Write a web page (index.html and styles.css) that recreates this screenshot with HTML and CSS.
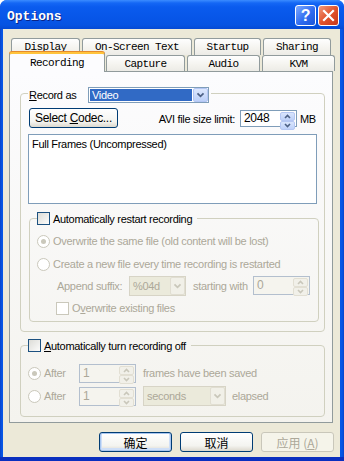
FILE: index.html
```html
<!DOCTYPE html>
<html lang="en">
  <head>
    <meta charset="UTF-8" />
    <title>Options</title>
    <link rel="stylesheet" href="styles.css">
  </head>
  <body>
    <div class="window">
      <div class="titlebar">
        <span class="title">Options</span>
        <div class="caption">
          <span class="cbtn help">?</span>
          <span class="cbtn close">
            <svg width="19" height="19" viewBox="0 0 19 19"><path d="M5 5 L14 14 M14 5 L5 14" stroke="#fff" stroke-width="2.2" stroke-linecap="square"/></svg>
          </span>
        </div>
      </div>
      <div class="client">
        <div class="tabs">
          <div class="tabrow back">
            <span class="tab t-display">Display</span>
            <span class="tab t-ost">On-Screen Text</span>
            <span class="tab t-startup">Startup</span>
            <span class="tab t-sharing">Sharing</span>
          </div>
          <div class="tabrow front">
            <span class="tab t-recording on">Recording</span>
            <span class="tab t-capture">Capture</span>
            <span class="tab t-audio">Audio</span>
            <span class="tab t-kvm">KVM</span>
          </div>
        </div>

        <div class="panel">
          <fieldset class="group g-record">
            <legend class="lg-record">
              <span class="lg-in">
                <span class="lbl-record"><u>R</u>ecord as</span>
                <span class="combo c-video">
                  <span class="value sel">Video</span>
                  <span class="drop">
                    <svg width="15" height="14" viewBox="0 0 15 14"><path d="M4 5 L7.5 8.5 L11 5" fill="none" stroke="#4d6185" stroke-width="2"/></svg>
                  </span>
                </span>
              </span>
            </legend>
            <div class="codec-row">
              <span class="btn codec"><span>Select <u>C</u>odec...</span></span>
              <div class="limit">
                <span>AVI file size limit:</span>
                <span class="spin">
                  <span class="val">2048</span>
                  <span class="arrows">
                    <span class="arr"><svg width="13" height="7" viewBox="0 0 13 7"><path d="M4 5 L6.5 2.5 L9 5" fill="none" stroke="#4d6185" stroke-width="1.6"/></svg></span>
                    <span class="arr"><svg width="13" height="7" viewBox="0 0 13 7"><path d="M4 2 L6.5 4.5 L9 2" fill="none" stroke="#4d6185" stroke-width="1.6"/></svg></span>
                  </span>
                </span>
                <span class="mb">MB</span>
              </div>
            </div>
            <div class="listbox">Full Frames (Uncompressed)</div>

            <fieldset class="group g-restart">
              <legend class="lg-check">
                <span class="lg-in"><span class="check"></span><span>Automatically restart recording</span></span>
              </legend>
              <div class="opt r1 off"><span class="radio dot"></span><span>Overwrite the same file (old content will be lost)</span></div>
              <div class="opt r2 off"><span class="radio"></span><span>Create a new file every time recording is restarted</span></div>
              <div class="opt r3 off">
                <span class="lbl-suffix">Append suffix:</span>
                <span class="combo c-suffix dis">
                  <span class="value">%04d</span>
                  <span class="drop">
                    <svg width="15" height="14" viewBox="0 0 15 14"><path d="M4 5 L7.5 8.5 L11 5" fill="none" stroke="#c9c7ba" stroke-width="2"/></svg>
                  </span>
                </span>
                <span class="lbl-start">starting with</span>
                <span class="spin dis">
                  <span class="val">0</span>
                  <span class="arrows">
                    <span class="arr"><svg width="13" height="7" viewBox="0 0 13 7"><path d="M4 5 L6.5 2.5 L9 5" fill="none" stroke="#c9c7ba" stroke-width="1.6"/></svg></span>
                    <span class="arr"><svg width="13" height="7" viewBox="0 0 13 7"><path d="M4 2 L6.5 4.5 L9 2" fill="none" stroke="#c9c7ba" stroke-width="1.6"/></svg></span>
                  </span>
                </span>
              </div>
              <div class="opt r4 off"><span class="check dis"></span><span>O<u>v</u>erwrite existing files</span></div>
            </fieldset>
          </fieldset>

          <fieldset class="group g-off">
            <legend class="lg-check">
              <span class="lg-in"><span class="check"></span><span><u>A</u>utomatically turn recording off</span></span>
            </legend>
            <div class="opt s1 off">
              <span class="after"><span class="radio dot"></span><span>After</span></span>
              <span class="spin dis">
                <span class="val">1</span>
                <span class="arrows">
                  <span class="arr"><svg width="13" height="7" viewBox="0 0 13 7"><path d="M4 5 L6.5 2.5 L9 5" fill="none" stroke="#c9c7ba" stroke-width="1.6"/></svg></span>
                  <span class="arr"><svg width="13" height="7" viewBox="0 0 13 7"><path d="M4 2 L6.5 4.5 L9 2" fill="none" stroke="#c9c7ba" stroke-width="1.6"/></svg></span>
                </span>
              </span>
              <span class="tail">frames have been saved</span>
            </div>
            <div class="opt s2 off">
              <span class="after"><span class="radio"></span><span>After</span></span>
              <span class="spin dis">
                <span class="val">1</span>
                <span class="arrows">
                  <span class="arr"><svg width="13" height="7" viewBox="0 0 13 7"><path d="M4 5 L6.5 2.5 L9 5" fill="none" stroke="#c9c7ba" stroke-width="1.6"/></svg></span>
                  <span class="arr"><svg width="13" height="7" viewBox="0 0 13 7"><path d="M4 2 L6.5 4.5 L9 2" fill="none" stroke="#c9c7ba" stroke-width="1.6"/></svg></span>
                </span>
              </span>
              <span class="combo c-seconds dis">
                <span class="value">seconds</span>
                <span class="drop">
                  <svg width="15" height="14" viewBox="0 0 15 14"><path d="M4 5 L7.5 8.5 L11 5" fill="none" stroke="#c9c7ba" stroke-width="2"/></svg>
                </span>
              </span>
              <span class="tail2">elapsed</span>
            </div>
          </fieldset>
        </div>

        <div class="buttons">
          <span class="btn dlg default"><span>确定</span></span>
          <span class="btn dlg"><span>取消</span></span>
          <span class="btn dlg dis"><span>应用 (<u>A</u>)</span></span>
        </div>
      </div>
    </div>
  </body>
</html>
```

FILE: styles.css
```css
* {
  margin: 0;
  padding: 0;
  box-sizing: border-box;
}
body {
  background: #fff;
  font-family: "Liberation Sans", Arial, sans-serif;
  font-size: 11px;
  letter-spacing: -0.3px;
  color: #000;
}
.window {
  width: 344px;
  height: 461px;
  display: flex;
  flex-direction: column;
  background: linear-gradient(to right, #0843c9, #0656e6 2px, #0656e6 calc(100% - 2px), #0843c9);
  border-radius: 7px 7px 0 0;
  border-bottom: 4px solid #0a2fbf;
  overflow: hidden;
}
.titlebar {
  height: 29px;
  display: flex;
  align-items: center;
  justify-content: space-between;
  padding: 0 5px 0 7px;
  background: linear-gradient(#3b8cff 0, #1467f5 3px, #0a5bee 7px, #0756e8 18px, #0653e2 25px, #0549d4 29px);
}
.title {
  font: bold 13px "Liberation Mono", monospace;
  letter-spacing: 0;
  color: #fff;
  text-shadow: 1px 1px 0 #0b2486;
  padding-top: 3px;
}
.caption {
  display: flex;
  gap: 2px;
  margin-top: 2px;
}
.cbtn {
  width: 21px;
  height: 21px;
  border: 1px solid #fff;
  border-radius: 3px;
  display: flex;
  align-items: center;
  justify-content: center;
}
.help {
  background: linear-gradient(135deg, #7fa9ff, #2f6cf0 55%, #1c55d8);
  color: #fff;
  font: bold 16px "Liberation Sans", sans-serif;
}
.close {
  background: linear-gradient(135deg, #f29a7c, #e1542d 50%, #c7381a);
}

.client {
  flex: 1;
  margin: 0 4px 0 3px;
  background: #ece9d8;
  display: flex;
  flex-direction: column;
}

/* tabs */
.tabs {
  margin: 9px 0 0 6px;
}
.tabrow {
  display: flex;
}
.tabrow.back {
  height: 15px;
  padding-left: 2px;
  gap: 2px;
}
.tabrow.front {
  height: 18px;
  gap: 1px;
}
.tab {
  display: block;
  height: 17px;
  border: 1px solid #919b9c;
  border-bottom: none;
  border-radius: 3px 3px 0 0;
  background: linear-gradient(#fefefe, #f4f3ee 60%, #ecebe6);
  font: 11px "Liberation Mono", monospace;
  letter-spacing: -0.6px;
  text-align: center;
  line-height: 15px;
  padding-top: 1px;
}
.front .tab {
  margin-top: 2px;
  height: 16px;
}
.front .tab.on {
  position: relative;
  z-index: 2;
  margin-top: -1px;
  height: 20px;
  background: #fcfcfe;
  border-top: 2px solid #ffc43c;
  box-shadow: 0 -1px 0 #e68b2c;
  line-height: 16px;
}
.t-display { width: 69px; }
.t-ost { width: 110px; }
.t-startup { width: 67px; }
.t-sharing { width: 68px; }
.t-recording { width: 96px; }
.t-capture { width: 79px; }
.t-audio { width: 73px; margin-left: 1px; }
.t-kvm { width: 73px; margin-left: 1px; }

/* panel */
.panel {
  margin: 0 7px 0 6px;
  height: 352px;
  border: 1px solid #919b9c;
  background: linear-gradient(#fcfcfe, #f4f3ee);
  padding: 12px 0 0 10px;
}
.group {
  border: 1px solid #d0d0bf;
  border-radius: 4px;
  min-width: 0;
  width: 305px;
  padding: 5px 7px 9px;
}
legend {
  padding: 0;
}
.lg-in {
  display: flex;
  align-items: center;
}
.lg-record {
  padding: 3px 2px 0 1px;
}
.lbl-record {
  width: 59px;
}
.lg-check .lg-in {
  height: 13px;
  gap: 3px;
  padding-right: 5px;
}
u {
  text-decoration: underline;
  text-underline-offset: 1px;
}

/* combos and spins */
.combo {
  display: flex;
  height: 16px;
  border: 1px solid #7f9db9;
  background: #fff;
  padding: 1px;
}
.combo .value {
  flex: 1;
  padding-left: 2px;
  line-height: 12px;
}
.combo .value.sel {
  background: #316ac5;
  color: #fff;
}
.combo .drop {
  width: 15px;
  margin: -1px -1px -1px 1px;
  background: linear-gradient(#dce7fd, #bcd0f8);
  border: 1px solid #b3c6f4;
  border-radius: 2px;
  display: flex;
  align-items: center;
  justify-content: center;
}
.c-video { width: 121px; }
.combo.dis {
  height: 20px;
  border-color: #d7d4c6;
  background: #ebeadb;
  color: #aca899;
}
.combo.dis .value {
  line-height: 16px;
}
.combo.dis .drop {
  background: #f1f0e8;
  border-color: #e1ded2;
}
.c-suffix { width: 57px; }
.c-seconds { width: 83px; margin-left: 7px; }

.spin {
  display: flex;
  width: 57px;
  height: 17px;
  border: 1px solid #7f9db9;
  background: #fff;
}
.spin .val {
  flex: 1;
  padding-left: 3px;
  line-height: 14px;
  font-size: 12px;
}
.spin .arrows {
  width: 15px;
  margin: 1px;
  display: flex;
  flex-direction: column;
}
.arr {
  flex: 1;
  background: linear-gradient(#d9e5fd, #bed1f9);
  border: 1px solid #b5c7f3;
  border-radius: 2px;
  display: flex;
  align-items: center;
  justify-content: center;
}
.spin.dis {
  height: 19px;
  border-color: #b3bfce;
  background: #f5f4ee;
  color: #aca899;
}
.spin.dis .val {
  line-height: 16px;
}
.spin.dis .arr {
  background: #f1f0e9;
  border-color: #e2dfd3;
}

/* record group */
.codec-row {
  display: flex;
  align-items: flex-end;
  justify-content: space-between;
  height: 20px;
}
.btn {
  display: flex;
  align-items: center;
  justify-content: center;
  height: 20px;
  border: 1px solid #003c74;
  border-radius: 3px;
  background: linear-gradient(#ffffff, #f4f4f0 70%, #dcd8cd);
}
.codec {
  width: 89px;
  margin-left: 1px;
  font-size: 12px;
}
.limit {
  display: flex;
  align-items: center;
  gap: 5px;
  margin-bottom: 1px;
}
.mb {
  width: 17px;
  margin-left: -2px;
}
.listbox {
  height: 70px;
  margin-top: 6px;
  border: 1px solid #7f9db9;
  background: #fff;
  padding: 3px 3px;
  line-height: 13px;
}

.check {
  width: 13px;
  height: 13px;
  border: 1px solid #1c5180;
  background: linear-gradient(135deg, #dcdcd7, #fcfcfb);
}
.check.dis {
  border-color: #cac8bb;
  background: #fff;
}
.radio {
  width: 13px;
  height: 13px;
  border-radius: 50%;
  border: 1px solid #cac8bb;
  background: #fff;
  display: flex;
  align-items: center;
  justify-content: center;
}
.radio.dot::after {
  content: "";
  width: 5px;
  height: 5px;
  border-radius: 50%;
  background: #cac8bb;
}
.opt {
  display: flex;
  align-items: center;
  gap: 3px;
}
.off {
  color: #aca899;
}

.g-restart {
  width: 290px;
  margin: 8px 0 0 1px;
  padding: 0 7px 6px;
}
.r1 { height: 16px; margin-top: 8px; }
.r2 { height: 16px; margin-top: 7px; }
.r3 { height: 21px; margin-top: 3px; padding-left: 20px; gap: 0; }
.r4 { height: 14px; margin-top: 5px; padding-left: 19px; }
.lbl-suffix { width: 72px; }
.lbl-start { width: 60px; margin-left: 7px; }

.g-off {
  margin-top: 7px;
  padding-bottom: 10px;
}
.s1 { height: 20px; margin-top: 6px; gap: 0; }
.s2 { height: 20px; margin-top: 3px; gap: 0; }
.after {
  display: flex;
  align-items: center;
  gap: 3px;
  width: 51px;
}
.tail { margin-left: 7px; }
.tail2 { margin-left: 6px; }

/* dialog buttons */
.buttons {
  display: flex;
  justify-content: flex-end;
  gap: 8px;
  margin-top: 9px;
  padding-right: 6px;
}
.dlg {
  width: 73px;
  font: 12px "Noto Sans CJK SC", sans-serif;
  letter-spacing: 0;
}
.dlg.default {
  box-shadow: inset 0 0 0 1px #a8c6f0, inset 0 -1px 0 2px #cfdff7;
}
.dlg.dis {
  border-color: #c9c7ba;
  background: #f5f4ea;
  color: #aca899;
}
```
